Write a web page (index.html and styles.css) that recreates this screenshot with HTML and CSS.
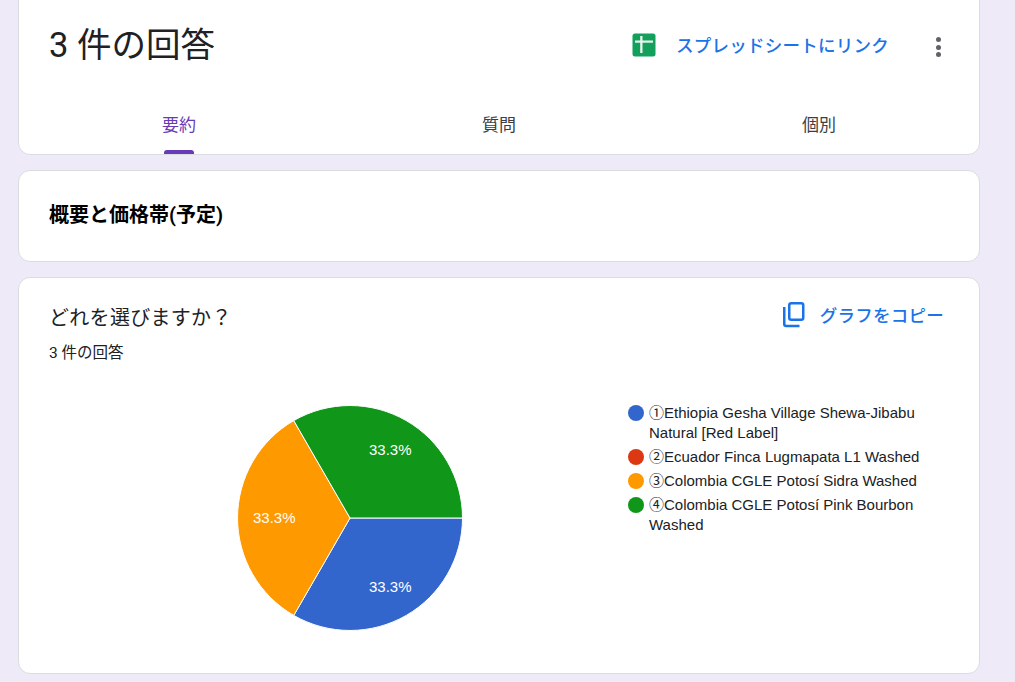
FILE: index.html
```html
<!DOCTYPE html>
<html lang="ja">
<head>
    <meta charset="utf-8">
    <title>3 件の回答</title>
    <link rel="stylesheet" href="styles.css">
</head>
<body>
    <div class="page">
        <div class="card summary-card">
            <div class="summary-head">
                <h1 class="summary-title">3 件の回答</h1>
                <div class="sheet-link">
                    <svg class="sheet-icon" viewBox="0 0 24 24" width="24" height="24">
                        <rect x="0.500" y="0.500" width="23" height="23" rx="2.500" fill="#12a05c"/>
                        <path d="M3 7.500h18v2.200H3z" fill="#e8f5ee"/>
                        <path d="M8.200 3h2.300v17H8.200z" fill="#e8f5ee"/>
                    </svg>
                    <span class="link-text">スプレッドシートにリンク</span>
                </div>
                <div class="more-dots">
                    <span></span>
                    <span></span>
                    <span></span>
                </div>
            </div>
            <div class="tabs">
                <div class="tab active">要約</div>
                <div class="tab">質問</div>
                <div class="tab">個別</div>
            </div>
        </div>

        <div class="card section-card">
            <h2 class="section-title">概要と価格帯(予定)</h2>
        </div>

        <div class="card chart-card">
            <div class="chart-head">
                <div>
                    <div class="question">どれを選びますか？</div>
                    <div class="count">3 件の回答</div>
                </div>
                <div class="copy-link">
                    <svg viewBox="0 0 24 28" width="24" height="28" fill="none" stroke="#1a73e8" stroke-width="2.500">
                        <rect x="7.250" y="3.250" width="14" height="16.500" rx="2"/>
                        <path d="M2.250 7v17a2 2 0 0 0 2 2H17.500"/>
                    </svg>
                    <span class="link-text">グラフをコピー</span>
                </div>
            </div>
            <div class="chart-body">
                <svg class="pie" viewBox="0 0 240 240" width="240" height="240">
                    <path d="M120 120H232.500A112.500 112.500 0 0 1 63.750 217.400Z" fill="#3366cc" stroke="#fff"/>
                    <path d="M120 120L63.750 217.400A112.500 112.500 0 0 1 63.750 22.600Z" fill="#ff9900" stroke="#fff"/>
                    <path d="M120 120L63.750 22.600A112.500 112.500 0 0 1 232.500 120Z" fill="#109618" stroke="#fff"/>
                    <text x="139" y="194" class="pie-label">33.3%</text>
                    <text x="23" y="125" class="pie-label">33.3%</text>
                    <text x="139" y="57" class="pie-label">33.3%</text>
                </svg>
                <ul class="legend">
                    <li><i class="dot blue"></i><span>①Ethiopia Gesha Village Shewa-Jibabu Natural [Red Label]</span></li>
                    <li><i class="dot red"></i><span>②Ecuador Finca Lugmapata L1 Washed</span></li>
                    <li><i class="dot orange"></i><span>③Colombia CGLE Potosí Sidra Washed</span></li>
                    <li><i class="dot green"></i><span>④Colombia CGLE Potosí Pink Bourbon Washed</span></li>
                </ul>
            </div>
        </div>
    </div>
</body>
</html>
```

FILE: styles.css
```css
html, body {
    height: 100%;
}

body {
    margin: 0;
    overflow: hidden;
    background: #eeeaf8;
    color: #202124;
    font-family: Roboto, "Noto Sans CJK JP", sans-serif;
}

.page {
    display: flex;
    flex-direction: column;
    gap: 15px;
    width: 962px;
    margin: -20px 0 0 18px;
}

.card {
    box-sizing: border-box;
    background: #fff;
    border: 1px solid #dadce0;
    border-radius: 12px;
}

.summary-card {
    height: 175px;
    display: flex;
    flex-direction: column;
}

.summary-head {
    display: flex;
    align-items: center;
    height: 84px;
    padding: 22px 30px 0 30px;
}

.summary-title {
    flex: 1;
    margin: 0;
    font-size: 34.500px;
    font-weight: 400;
    line-height: 44px;
}

.sheet-link {
    display: flex;
    align-items: center;
    gap: 20px;
    margin-top: -1px;
}

.link-text {
    color: #1a73e8;
    font-size: 17.500px;
    font-weight: 500;
    letter-spacing: 0.25px;
}

.more-dots {
    display: flex;
    flex-direction: column;
    gap: 2.500px;
    margin: 4px 8px 0 47px;
}

.more-dots span {
    width: 5px;
    height: 5px;
    border-radius: 50%;
    background: #5f6368;
}

.tabs {
    display: grid;
    grid-template-columns: repeat(3, 1fr);
    flex: 1;
}

.tab {
    position: relative;
    padding-top: 26px;
    text-align: center;
    font-size: 17px;
    line-height: 24px;
    color: #3c4043;
}

.tab.active {
    color: #673ab7;
}

.tab.active::after {
    content: "";
    position: absolute;
    left: 50%;
    bottom: 0;
    width: 30px;
    height: 4px;
    margin-left: -15px;
    background: #673ab7;
    border-radius: 3px 3px 0 0;
}

.section-card {
    height: 92px;
    display: flex;
    align-items: center;
    padding: 0 30px 5px;
}

.section-title {
    margin: 0;
    font-size: 20px;
    font-weight: 700;
    color: #000;
}

.chart-card {
    height: 397px;
    padding: 0 35px 0 30px;
}

.chart-head {
    display: flex;
    justify-content: space-between;
    align-items: flex-start;
    padding-top: 25px;
}

.question {
    font-size: 20px;
    letter-spacing: 0.3px;
    line-height: 30px;
}

.count {
    margin-top: 10px;
    font-size: 15.500px;
    line-height: 20px;
}

.copy-link {
    display: flex;
    align-items: center;
    gap: 14px;
    margin-top: -3px;
}

.chart-body {
    display: flex;
    align-items: flex-start;
    margin-top: 14px;
}

.pie {
    flex: none;
    margin: 21px 0 0 181px;
}

.pie-label {
    fill: #fff;
    font-family: "Liberation Sans", Arial, sans-serif;
    font-size: 15px;
}

.legend {
    display: flex;
    flex-direction: column;
    gap: 4px;
    width: 297px;
    margin: 26px 0 0 158px;
    padding: 0;
    list-style: none;
    font-family: "Liberation Sans", "Noto Sans CJK JP", sans-serif;
    font-size: 15px;
    line-height: 20px;
}

.legend li {
    display: flex;
    gap: 5px;
}

.dot {
    flex: none;
    width: 16px;
    height: 16px;
    margin-top: 2px;
    border-radius: 50%;
}

.blue { background: #3366cc; }
.red { background: #dc3912; }
.orange { background: #ff9900; }
.green { background: #109618; }
```
